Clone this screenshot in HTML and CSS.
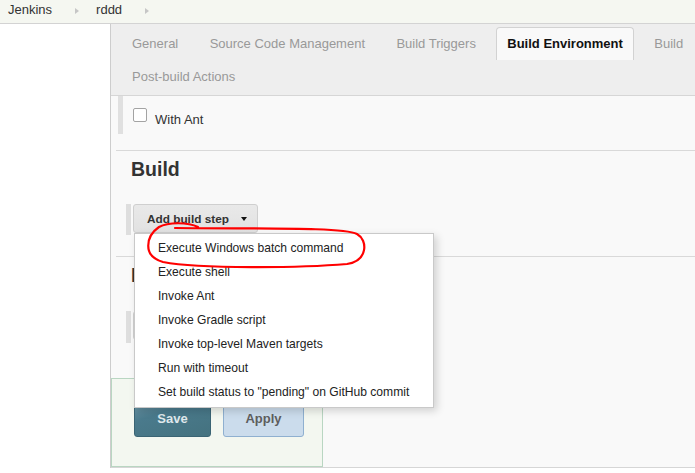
FILE: index.html
```html
<!DOCTYPE html>
<html>
<head>
<meta charset="utf-8">
<link rel="stylesheet" href="styles.css">
</head>
<body>
<div class="breadcrumbs">
  <span class="crumb">Jenkins</span><span class="sep"></span><span class="crumb">rddd</span><span class="sep"></span>
</div>
<div class="page">
  <div class="side"></div>
  <div class="main">
    <div class="tabbar">
      <span class="tab">General</span>
      <span class="tab">Source Code Management</span>
      <span class="tab">Build Triggers</span>
      <span class="tab active">Build Environment</span>
      <span class="tab">Build</span>
      <span class="tab">Post-build Actions</span>
    </div>
    <div class="content">
      <div class="env-row">
        <span class="checkbox"></span>
        <span class="env-label">With Ant</span>
      </div>
      <div class="rule"></div>
      <h2 class="section">Build</h2>
      <div class="step">
        <div class="btn-add">Add build step<span class="caret"></span></div>
        <ul class="menu">
          <li>Execute Windows batch command</li>
          <li>Execute shell</li>
          <li>Invoke Ant</li>
          <li>Invoke Gradle script</li>
          <li>Invoke top-level Maven targets</li>
          <li>Run with timeout</li>
          <li>Set build status to "pending" on GitHub commit</li>
        </ul>
      </div>
      <div class="rule"></div>
      <h2 class="section">Post-build Actions</h2>
      <div class="step step2">
        <div class="btn-add">Add post-build action<span class="caret"></span></div>
      </div>
      <div class="sticker">
        <span class="btn save">Save</span>
        <span class="btn apply">Apply</span>
      </div>
    </div>
  </div>
</div>
<svg class="annot" width="695" height="473" viewBox="0 0 695 473">
  <path d="M 198 227 C 188 222, 168 222, 159 227 C 146 236, 142 256, 163 262 C 200 269, 300 268, 347 264 C 368 261, 368 240, 357 234 C 343 227, 262 229, 175 228" fill="none" stroke="#f00" stroke-width="2.2" stroke-linecap="round" stroke-linejoin="round"/>
</svg>
</body>
</html>
```
FILE: styles.css
```css
html, body {
  margin: 0;
  padding: 0;
  overflow: hidden;
}
body {
  width: 695px;
  height: 473px;
  position: relative;
  background: #fff;
  font-family: "Liberation Sans", Arial, sans-serif;
  font-size: 13px;
  color: #333;
}
.breadcrumbs {
  height: 23px;
  box-sizing: content-box;
  background: #f5f7f1;
  border-bottom: 1px solid #d3d3d3;
  display: flex;
  align-items: flex-start;
  padding-left: 8px;
}
.crumb {
  margin-top: 2px;
  line-height: 16px;
  color: #333;
}
.sep {
  width: 0;
  height: 0;
  margin: 8px 17px 0 23px;
  border-left: 4px solid #c6c6c6;
  border-top: 3.5px solid transparent;
  border-bottom: 3.5px solid transparent;
}
.page {
  display: flex;
}
.side {
  width: 110px;
  flex: none;
  border-right: 1px solid #cdcdcd;
  background: #fff;
}
.main {
  width: 680px;
  flex: none;
  background: #f9f9f9;
  border-bottom: 1px solid #d6d6d6;
}
.tabbar {
  background: #eee;
  border-bottom: 1px solid #d6d6d6;
  padding: 3px 0 2px 10px;
  display: flex;
  flex-wrap: wrap;
}
.tab {
  height: 33px;
  line-height: 33px;
  padding: 0 11px;
  margin-right: 9.4px;
  color: #999;
  white-space: nowrap;
  box-sizing: border-box;
}
.tab.active {
  background: #f9f9f9;
  border: 1px solid #d2d2d2;
  border-bottom: none;
  border-radius: 4px 4px 0 0;
  padding: 0 10px;
  line-height: 31px;
  color: #111;
  font-weight: bold;
}
.content {
  display: flex;
  flex-direction: column;
  align-items: flex-start;
}
.env-row {
  margin-left: 7px;
  border-left: 5px solid #e0e0e0;
  height: 38px;
  display: flex;
  align-items: flex-start;
}
.checkbox {
  width: 14px;
  height: 14px;
  box-sizing: border-box;
  margin: 12px 0 0 10px;
  border: 1px solid #a3a3a3;
  border-radius: 2px;
  background: #fff;
}
.env-label {
  margin: 16px 0 0 8px;
  line-height: 16px;
  color: #333;
}
.rule {
  align-self: stretch;
  margin: 16px 0 0 5px;
  height: 0;
  border-top: 1px solid #d9d9d9;
}
.section {
  margin: 6px 0 0 20px;
  font-size: 19.5px;
  line-height: 24px;
  font-weight: bold;
  color: #333;
}
.step {
  margin: 23px 0 0 15px;
  border-left: 5px solid #dedede;
  height: 31px;
  position: relative;
  display: flex;
}
.step + .rule {
  margin-top: 21px;
}
.step2 {
  margin-top: 24px;
  height: 32px;
}
.btn-add {
  margin-left: 2px;
  height: 29px;
  box-sizing: border-box;
  border: 1px solid #cfcfcf;
  border-radius: 3px;
  background: linear-gradient(#e9e9e9, #e2e2e2);
  padding: 0 10px 0 13px;
  display: flex;
  align-items: center;
  font-size: 11.8px;
  font-weight: bold;
  color: #333;
  white-space: nowrap;
}
.caret {
  width: 0;
  height: 0;
  margin-left: 12px;
  border-left: 3.5px solid transparent;
  border-right: 3.5px solid transparent;
  border-top: 4px solid #111;
}
.menu {
  position: absolute;
  left: 3px;
  top: 29px;
  z-index: 5;
  width: 300px;
  box-sizing: border-box;
  margin: 0;
  padding: 2px 0 3px;
  list-style: none;
  background: #fff;
  border: 1px solid #c9c9c9;
  box-shadow: 3px 3px 8px rgba(0, 0, 0, 0.16);
}
.menu li {
  height: 24px;
  line-height: 24px;
  padding-left: 23px;
  font-size: 12.1px;
  color: #222;
  white-space: nowrap;
}
.sticker {
  margin-top: 35px;
  width: 212px;
  height: 89px;
  box-sizing: border-box;
  border: 1px solid #b9d6c2;
  background: #f3f7f0;
  padding: 20px 0 0 22px;
  display: flex;
  gap: 12px;
}
.btn {
  height: 38px;
  box-sizing: border-box;
  border-radius: 3px;
  font-weight: bold;
  font-size: 13px;
  display: flex;
  align-items: center;
  justify-content: center;
}
.save {
  width: 77px;
  background: linear-gradient(160deg, #6e98a8 0%, #4a7a8c 35%, #44727f 100%);
  border: 1px solid #3a6474;
  color: #dfe8ec;
}
.apply {
  width: 81px;
  background: #cbdcec;
  border: 1px solid #8fb0d0;
  color: #5e5e5e;
}
.annot {
  position: absolute;
  left: 0;
  top: 0;
  z-index: 10;
  pointer-events: none;
}
```
